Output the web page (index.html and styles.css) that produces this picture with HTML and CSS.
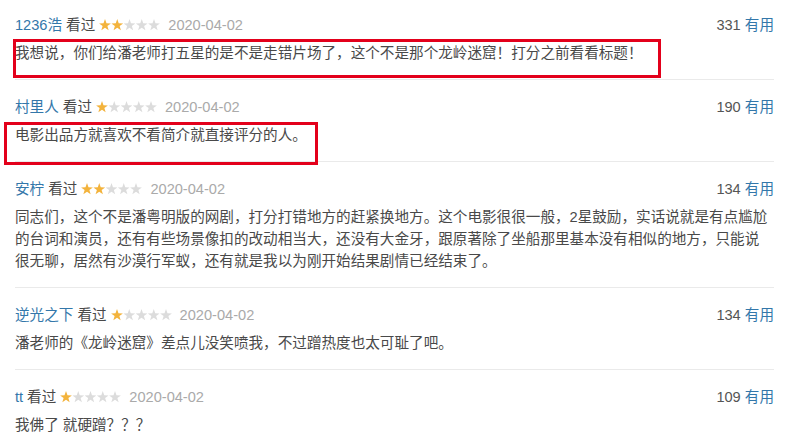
FILE: index.html
```html
<!DOCTYPE html>
<html lang="zh-CN">
<head>
  <meta charset="UTF-8" />
  <meta name="viewport" content="width=device-width, initial-scale=1.0"/>
  <title>短评</title>
  <link rel="stylesheet" href="styles.css">
</head>
<body>

  <!-- star shape, reused by every rating -->
  <svg class="defs" width="0" height="0" aria-hidden="true">
    <symbol id="star" viewBox="0 0 12 12">
      <path d="M6 0.1 L7.47 4.28 L11.9 4.38 L8.38 7.07 L9.65 11.32 L6 8.8 L2.35 11.32 L3.62 7.07 L0.1 4.38 L4.53 4.28 Z"/>
    </symbol>
  </svg>

  <div class="comments">

    <div class="comment">
      <div class="comment-info">
        <div class="meta">
          <a class="user">1236浩</a>
          <span class="watched">看过</span>
          <svg class="rating" width="61" height="12" viewBox="0 0 61 12">
            <use href="#star" x="0" width="12" height="12" class="on"/>
            <use href="#star" x="12.25" width="12" height="12" class="on"/>
            <use href="#star" x="24.5" width="12" height="12"/>
            <use href="#star" x="36.75" width="12" height="12"/>
            <use href="#star" x="49" width="12" height="12"/>
          </svg>
          <span class="date">2020-04-02</span>
        </div>
        <div class="votes"><span class="count">331</span> <a class="useful">有用</a></div>
      </div>
      <p class="text mark-a">我想说，你们给潘老师打五星的是不是走错片场了，这个不是那个龙岭迷窟！打分之前看看标题！</p>
    </div>

    <div class="comment">
      <div class="comment-info">
        <div class="meta">
          <a class="user">村里人</a>
          <span class="watched">看过</span>
          <svg class="rating" width="61" height="12" viewBox="0 0 61 12">
            <use href="#star" x="0" width="12" height="12" class="on"/>
            <use href="#star" x="12.25" width="12" height="12"/>
            <use href="#star" x="24.5" width="12" height="12"/>
            <use href="#star" x="36.75" width="12" height="12"/>
            <use href="#star" x="49" width="12" height="12"/>
          </svg>
          <span class="date">2020-04-02</span>
        </div>
        <div class="votes"><span class="count">190</span> <a class="useful">有用</a></div>
      </div>
      <p class="text mark-b">电影出品方就喜欢不看简介就直接评分的人。</p>
    </div>

    <div class="comment">
      <div class="comment-info">
        <div class="meta">
          <a class="user">安柠</a>
          <span class="watched">看过</span>
          <svg class="rating" width="61" height="12" viewBox="0 0 61 12">
            <use href="#star" x="0" width="12" height="12" class="on"/>
            <use href="#star" x="12.25" width="12" height="12" class="on"/>
            <use href="#star" x="24.5" width="12" height="12"/>
            <use href="#star" x="36.75" width="12" height="12"/>
            <use href="#star" x="49" width="12" height="12"/>
          </svg>
          <span class="date">2020-04-02</span>
        </div>
        <div class="votes"><span class="count">134</span> <a class="useful">有用</a></div>
      </div>
      <p class="text">同志们，这个不是潘粤明版的网剧，打分打错地方的赶紧换地方。这个电影很很一般，2星鼓励，实话说就是有点尴尬的台词和演员，还有有些场景像扣的改动相当大，还没有大金牙，跟原著除了坐船那里基本没有相似的地方，只能说很无聊，居然有沙漠行军蚁，还有就是我以为刚开始结果剧情已经结束了。</p>
    </div>

    <div class="comment">
      <div class="comment-info">
        <div class="meta">
          <a class="user">逆光之下</a>
          <span class="watched">看过</span>
          <svg class="rating" width="61" height="12" viewBox="0 0 61 12">
            <use href="#star" x="0" width="12" height="12" class="on"/>
            <use href="#star" x="12.25" width="12" height="12"/>
            <use href="#star" x="24.5" width="12" height="12"/>
            <use href="#star" x="36.75" width="12" height="12"/>
            <use href="#star" x="49" width="12" height="12"/>
          </svg>
          <span class="date">2020-04-02</span>
        </div>
        <div class="votes"><span class="count">134</span> <a class="useful">有用</a></div>
      </div>
      <p class="text">潘老师的《龙岭迷窟》差点儿没笑喷我，不过蹭热度也太可耻了吧。</p>
    </div>

    <div class="comment">
      <div class="comment-info">
        <div class="meta">
          <a class="user">tt</a>
          <span class="watched">看过</span>
          <svg class="rating" width="61" height="12" viewBox="0 0 61 12">
            <use href="#star" x="0" width="12" height="12" class="on"/>
            <use href="#star" x="12.25" width="12" height="12"/>
            <use href="#star" x="24.5" width="12" height="12"/>
            <use href="#star" x="36.75" width="12" height="12"/>
            <use href="#star" x="49" width="12" height="12"/>
          </svg>
          <span class="date">2020-04-02</span>
        </div>
        <div class="votes"><span class="count">109</span> <a class="useful">有用</a></div>
      </div>
      <p class="text">我佛了 就硬蹭？？？</p>
    </div>

  </div>

</body>
</html>
```

FILE: styles.css
```css
/* Minimal Reset */
* {
  margin: 0;
  padding: 0;
  box-sizing: border-box;
}

body {
  background: #fff;
  color: #494949;
  font-family: "Liberation Sans", Arial, "Noto Sans CJK SC", sans-serif;
  font-size: 14.6px;
  line-height: 22px;
  overflow: hidden;
}

.defs {
  position: absolute;
  width: 0;
  height: 0;
}

/* Comment list */
.comments {
  padding: 0 36px 0 15px;
}

.comment {
  padding: 16px 0 15px;
  border-bottom: 1px solid #eaeaea;
}
.comment:first-child {
  padding-top: 14px;
}

/* Header row: user, rating, date / votes */
.comment-info {
  display: flex;
  justify-content: space-between;
  align-items: center;
  height: 22px;
  margin-bottom: 6px;
}

.meta {
  display: flex;
  align-items: center;
}

.user {
  color: #37a;
  text-decoration: none;
}

.watched {
  color: #494949;
  margin-left: 4px;
}

.rating {
  margin-left: 4px;
  fill: #dcdcdc;
}
.rating .on {
  fill: #f3b33c;
}

.date {
  color: #aaa;
  margin-left: 8px;
}

.votes {
  color: #555;
}
.useful {
  color: #37a;
}

/* Comment body */
.text {
  padding-right: 4px;
  position: relative;
}

/* red annotation boxes drawn over the text */
.mark-a::after,
.mark-b::after {
  content: "";
  position: absolute;
  border: 3px solid #e3001b;
}
.mark-a::after {
  left: -2px;
  top: -3px;
  width: 642px;
  height: 33px;
}
.mark-b::after {
  left: -11px;
  top: -2px;
  width: 308px;
  height: 37px;
}
```
